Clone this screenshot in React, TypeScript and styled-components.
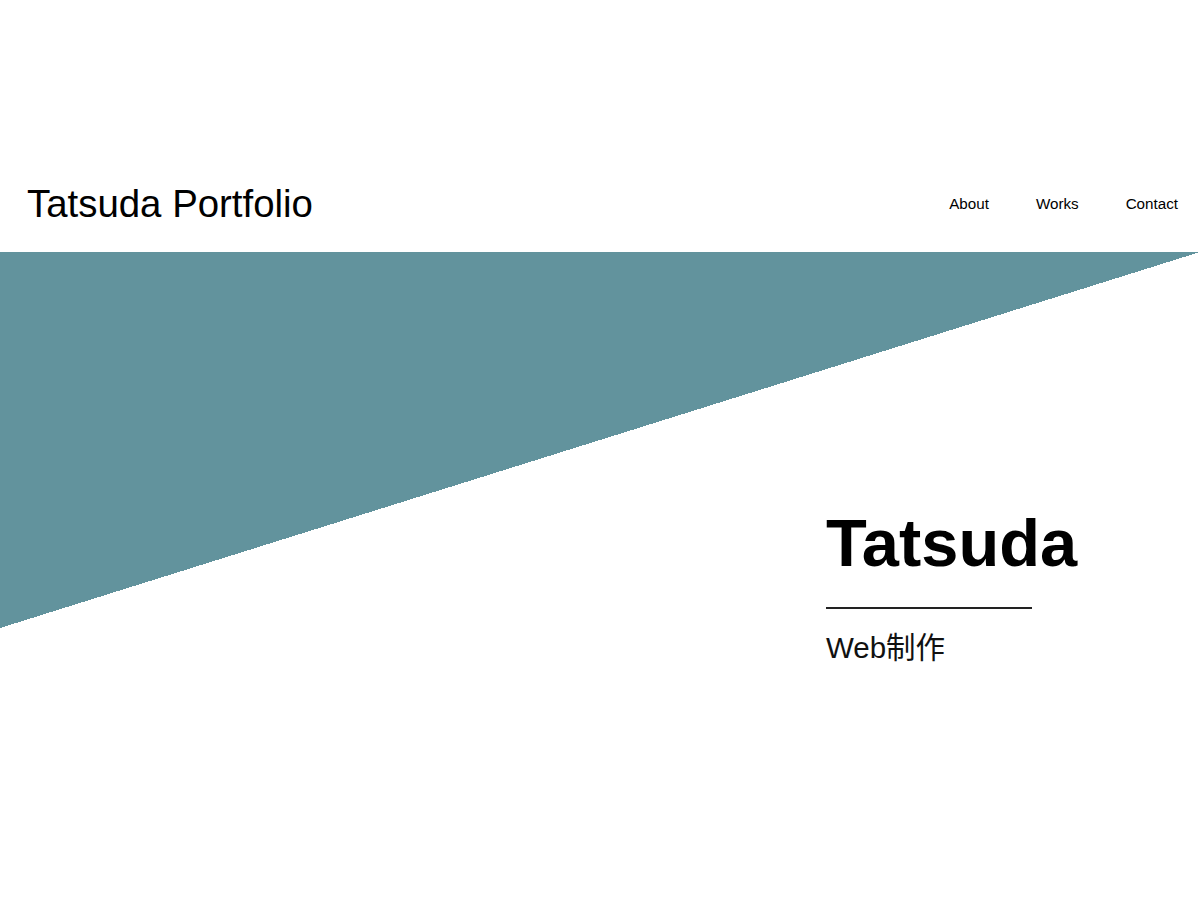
import React from "react";
import styled, { createGlobalStyle } from "styled-components";

const GlobalStyle = createGlobalStyle`
  html, body {
    margin: 0;
    padding: 0;
    background: #ffffff;
    font-family: "Liberation Sans", "Noto Sans CJK JP", Arial, sans-serif;
    color: #000;
  }
  * { box-sizing: border-box; }
`;

const Header = styled.header`
  height: 252px;
  padding: 156px 22px 0 27px;
  display: flex;
  align-items: flex-start;
  justify-content: space-between;
`;

const HeaderInner = styled.div`
  height: 96px;
  width: 100%;
  display: flex;
  align-items: center;
  justify-content: space-between;
`;

const Logo = styled.h1`
  margin: 0;
  padding-top: 1px;
  font-size: 38.4px;
  font-weight: 400;
  line-height: 1.15;
`;

const Nav = styled.nav`
  display: flex;
  align-items: center;
  gap: 47px;
`;

const NavLink = styled.a`
  font-size: 15.2px;
  line-height: 1.15;
  color: #000;
  text-decoration: none;
`;

const Hero = styled.section`
  min-height: 648px;
  padding: 253px 0 0 826px;
  background-image: linear-gradient(to bottom right, #62939d 50%, transparent 50%);
  background-size: 100% 376px;
  background-repeat: no-repeat;
`;

const HeroTitle = styled.h2`
  margin: 0 0 25px 0;
  font-size: 66.8px;
  font-weight: 700;
  line-height: 1.15;
`;

const Rule = styled.hr`
  margin: 0;
  width: 206px;
  height: 2px;
  border: none;
  background: #222;
`;

const HeroSub = styled.p`
  margin: 21px 0 0 0;
  font-family: "Liberation Sans", "Noto Sans CJK JP", sans-serif;
  font-size: 29.5px;
  line-height: 1.2;
  color: #111;
`;

export default function App() {
  return (
    <>
      <GlobalStyle />
      <Header>
        <HeaderInner>
          <Logo>Tatsuda Portfolio</Logo>
          <Nav>
            <NavLink href="#about">About</NavLink>
            <NavLink href="#works">Works</NavLink>
            <NavLink href="#contact">Contact</NavLink>
          </Nav>
        </HeaderInner>
      </Header>
      <Hero>
        <HeroTitle>Tatsuda</HeroTitle>
        <Rule />
        <HeroSub>Web制作</HeroSub>
      </Hero>
    </>
  );
}
